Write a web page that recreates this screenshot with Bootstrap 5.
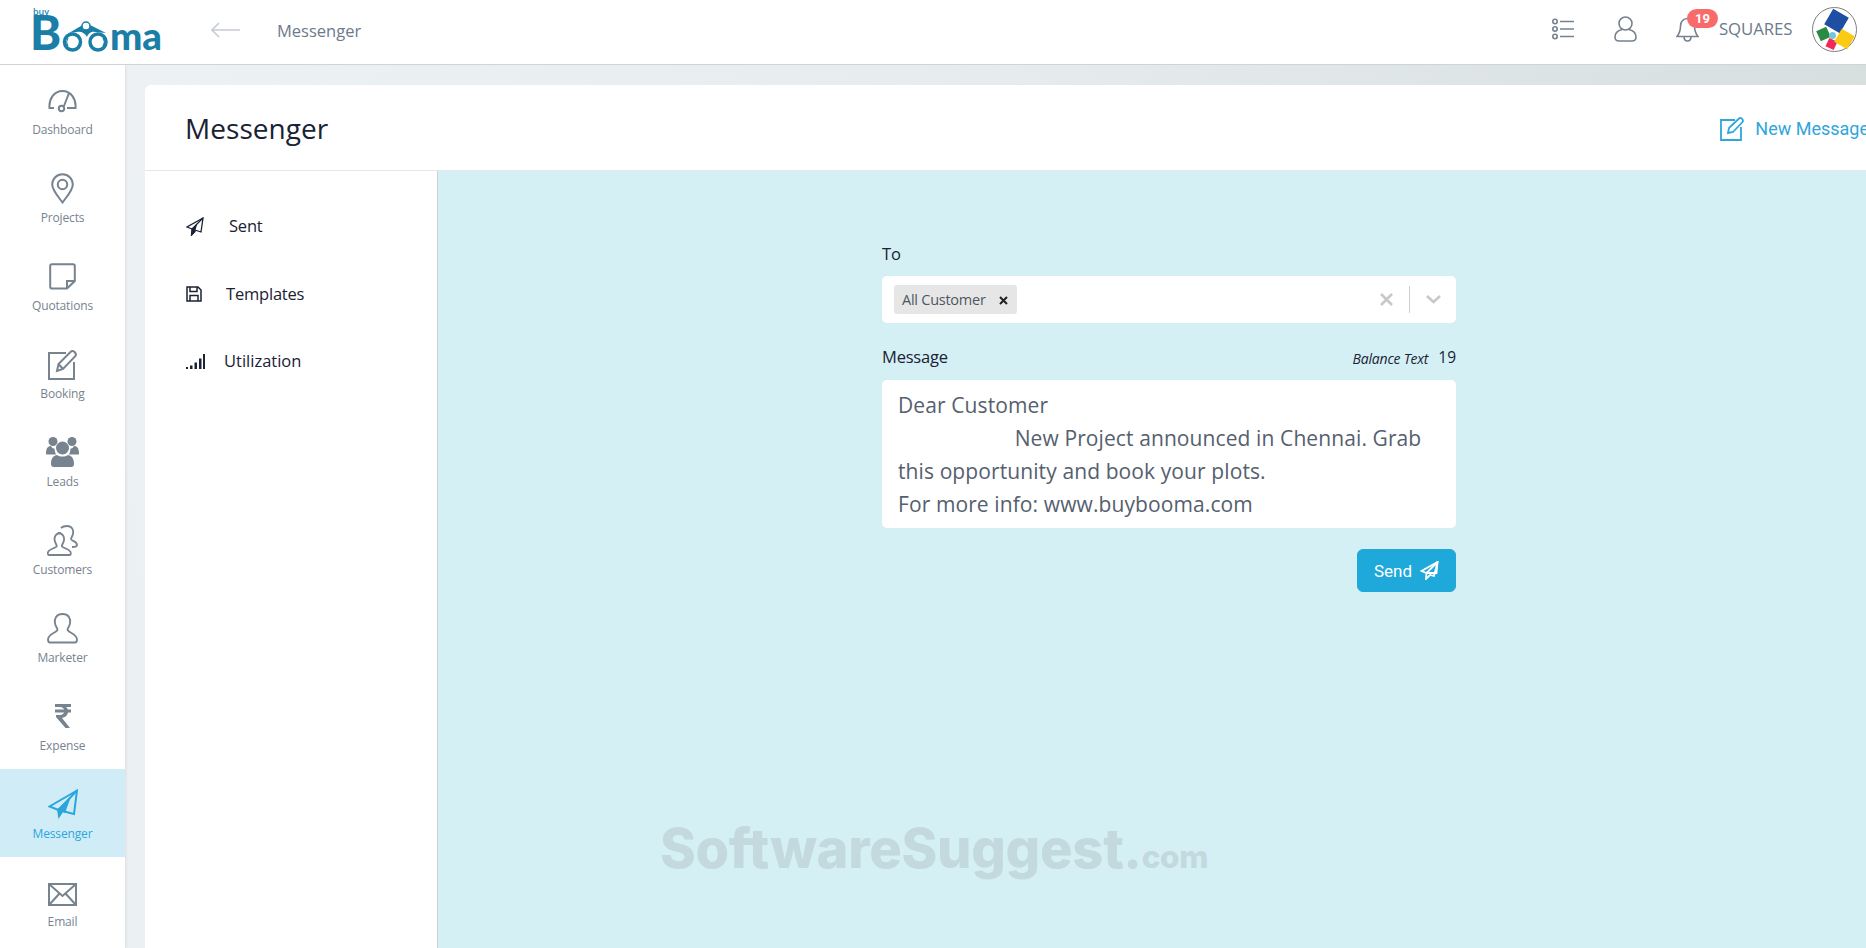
<!DOCTYPE html>
<html lang="en">
<head>
<meta charset="utf-8">
<title>Messenger</title>
<link href="https://cdn.jsdelivr.net/npm/bootstrap@5.3.0/dist/css/bootstrap.min.css" rel="stylesheet">
<style>
html,body{height:948px;overflow:hidden}
body{font-family:"Open Sans","Noto Sans",sans-serif;background:linear-gradient(100deg,#eef2f5 0%,#e6ecee 50%,#d4dcdc 100%);color:#1a2233}
.topbar{height:65px;background:#fff;border-bottom:1px solid #cfd4d9;padding:0 0 6px;flex-wrap:nowrap}
.logo-box{width:211px;padding-left:28px;height:64px;align-self:flex-start}
.back-arrow{width:66px;margin-top:2px}
.crumb{font-size:16.5px;color:#6c7a8c;margin-top:4px}
.top-ico{color:#76828f;stroke:currentColor;fill:none;stroke-width:1.6}
.t-list{margin-right:40px}
.t-user{margin-right:39px}
.bell-wrap{width:43px;height:40px}
.count-pill{position:absolute;left:11px;top:0;background:#f96b6b;color:#fff;font:700 13px/19px Roboto,sans-serif;border-radius:10px;width:31px;text-align:center}
.org{font-size:16.8px;color:#6c7a8c;width:93px;letter-spacing:-.1px}
.org-logo{margin-right:9px}
.shell{height:883px}
.side{width:125px;background:#fff;box-shadow:1px 0 3px rgba(0,0,0,.08)}
.side-item{height:88px;padding-top:17px;color:#77838f;text-decoration:none;font-size:12px;letter-spacing:-.15px}
.side-item:hover{color:#77838f}
.side-item.on{background:#d0edf7;color:#2aa6dc}
.side-item.on:hover{color:#2aa6dc}
.side-ico{height:36px;margin-bottom:3px}
.side-ico svg{display:block;fill:none;stroke:currentColor;stroke-width:2}
.side-ico .dash-svg{margin-top:2px}
.side-ico .mail-svg{margin-top:5px}
.side-name{line-height:18px}
.sheet{width:1755px;margin:20px 0 0 20px;background:#fff;border-top-left-radius:6px;flex:none}
.sheet-head{height:86px;padding:2px 31px 0 40px;border-bottom:1px solid #e4e8ea}
.sheet-title{font-size:28px;font-weight:400;margin:0;color:#1a2233;letter-spacing:.05px}
.new-link{color:#2fa6dc;text-decoration:none;font:400 18px Roboto,sans-serif}
.new-link svg{margin-right:10px;fill:none;stroke:currentColor;stroke-width:1.8}
.inner-menu{width:293px;border-right:1px solid #c9d5d8;padding-top:22px}
.inner-row{height:67.5px;padding-left:41px;color:#1a2233;font-size:16.5px;text-decoration:none;letter-spacing:-.2px}
.inner-row:hover{color:#1a2233}
.inner-row svg{display:block;flex:none}
.sent-t{margin-left:25px}.tpl-t{margin-left:24px}.utl-t{margin-left:19px;letter-spacing:0}
.panel{background:#d5f0f5;position:relative}
.compose{width:574px;margin:0 auto;padding-top:72px}
.f-label{font-size:16.5px;line-height:22px;color:#1a2233;letter-spacing:-.2px}
.to-box{height:47px;background:#fff;border-radius:5px;margin-top:11px;padding:0 12px;margin-bottom:22px}
.tag{background:#e6e6e6;border-radius:3px;height:29px;width:123px;padding:1px 8px 0;font-size:14.5px;color:#4d5763;letter-spacing:-.25px}
.tag svg{margin-left:auto;margin-right:1px}
.tools{margin-left:auto;gap:0}
.tools i{display:block;width:1px;height:27px;background:#cfcfcf;margin:0 16px}
.chev{margin-right:3px}
.bal{font-size:14px;font-style:italic;letter-spacing:-.2px;margin-right:10px;margin-top:2px}
.bal-n{font-size:15.5px;margin-top:1px}
.msg-box{display:block;width:100%;height:148px;margin-top:11px;border:0;border-radius:5px;background:#fff;color:#55606e;font:21px/33px "Open Sans",sans-serif;letter-spacing:.1px;padding:9px 16px 0;resize:none;outline:0;overflow:hidden}
.send-btn{background:#1fa8da;border-color:#1fa8da;color:#fff;width:99px;height:43px;margin-top:21px;font:400 17px Roboto,sans-serif;padding:0}
.send-btn:hover{background:#1fa8da;border-color:#1fa8da;color:#fff}
.send-btn svg{margin-left:8px;fill:none;stroke:#fff;stroke-width:1.8}
.wm{position:absolute;left:222px;top:642px;font:800 54.3px/70px Inter,sans-serif;color:#c3d9dd;white-space:nowrap;letter-spacing:-.3px}
.wm span{font-size:31.5px}
.wm b{font-weight:800;font-size:52px}
</style>
</head>
<body>
<nav class="navbar topbar d-flex align-items-center justify-content-start">
  <a class="logo-box d-block text-decoration-none" href="#" aria-label="Booma">
    <svg width="140" height="64" viewBox="28 0 140 64">
      <text x="33" y="15" font-family="Open Sans" font-size="9" font-weight="600" fill="#2a86ad">buy</text>
      <text x="30" y="50" font-family="Lato" font-size="47" font-weight="900" fill="#1a7ea6">B</text>
      <path d="M69 33 86 23 106 33 95 32C91 31 88 34 87 37 85 33 81 31 77 32Z" fill="#1a7ea6"/>
      <circle cx="86" cy="26" r="4" fill="#fff" stroke="#1a7ea6" stroke-width="1.5"/>
      <circle cx="72.500" cy="42" r="8" fill="none" stroke="#1a7ea6" stroke-width="3.500"/>
      <path d="M68 38a7 7 0 0 0 0 8" fill="none" stroke="#1a7ea6" stroke-width="1"/>
      <circle cx="98" cy="42" r="8" fill="none" stroke="#1a7ea6" stroke-width="3.500"/>
      <path d="M103 38a7 7 0 0 1 0 8" fill="none" stroke="#1a7ea6" stroke-width="1"/>
      <text x="110" y="50" font-family="Lato" font-size="37" font-weight="900" fill="#1a7ea6" textLength="52" lengthAdjust="spacingAndGlyphs">ma</text>
    </svg>
  </a>
  <a class="back-arrow d-block" href="#" aria-label="Back">
    <svg class="d-block" width="29" height="16" viewBox="0 0 29 16" fill="none" stroke="#c6ccd3" stroke-width="1.6"><path d="M29 8H1M8 1 1 8l7 7"/></svg>
  </a>
  <span class="crumb">Messenger</span>
  <div class="ms-auto d-flex align-items-center">
    <svg class="top-ico t-list" width="22" height="22" viewBox="0 0 22 22"><circle cx="3" cy="3.500" r="2.200"/><circle cx="3" cy="11" r="2.200"/><circle cx="3" cy="18.500" r="2.200"/><path d="M8 3.500h14M8 11h14M8 18.500h14"/></svg>
    <svg class="top-ico t-user" width="23" height="26" viewBox="0 0 23 26"><circle cx="11.500" cy="7.500" r="6.500"/><path d="M8 13.500C4 14.500 1 17 1 21c0 3 1.500 4 4 4h13c2.500 0 4-1 4-4 0-4-3-6.500-7-7.500"/></svg>
    <div class="bell-wrap position-relative">
      <svg class="top-ico position-absolute top-0 start-0 mt-2" width="23" height="26" viewBox="0 0 23 26"><path d="M11.500 1.500C7 1.500 4.500 5 4.500 9c0 6-1.500 8-3.500 10.500h21C20 17 18.500 15 18.500 9c0-4-2.500-7.500-7-7.500ZM8 19.500c0 6 7 6 7 0"/></svg>
      <span class="count-pill">19</span>
    </div>
    <span class="org">SQUARES</span>
    <svg class="org-logo" width="45" height="45" viewBox="-22.500 -22.500 45 45" role="img" aria-label="Squares logo">
      <circle r="22" fill="#fff" stroke="#7d7d7d" stroke-width="1"/>
      <rect x="-7" y="-17.500" width="18" height="18" fill="#1f4fa3" transform="rotate(30 2 -8.500)"/>
      <rect x="-16.500" y="-1" width="11" height="11" fill="#2a8a3f" transform="rotate(-25 -11 4.500)"/>
      <rect x="-7.500" y="10" width="9" height="9" fill="#ef2a5a" transform="rotate(25 -3 14.500)"/>
      <rect x="2.500" y="2" width="15" height="15" fill="#fbcb14" transform="rotate(30 10 9.500)"/>
      <circle cx="-2" cy="6" r="3.500" fill="#74c6da"/>
    </svg>
  </div>
</nav>

<div class="shell d-flex">
  <aside class="side flex-shrink-0">
    <a href="#" class="side-item d-flex flex-column align-items-center"><span class="side-ico d-flex align-items-center">
      <svg class="dash-svg" width="29" height="23" viewBox="0 0 29 23"><path d="M6 18H1.500C.7 9 6 1 14.500 1S28.300 9 27.500 18H19M21 3 16 16"/><circle cx="13.500" cy="18.500" r="2.700"/><path d="M5 11.500h.1M8.500 6h.1M14.500 4h.1M24 11.500h.1" stroke-width="1.800"/></svg></span><span class="side-name">Dashboard</span></a>
    <a href="#" class="side-item d-flex flex-column align-items-center"><span class="side-ico d-flex align-items-center">
      <svg width="23" height="31" viewBox="0 0 23 31"><path d="M11.500 29.500C6 22 1.200 17 1.200 11.500a10.300 10.300 0 0 1 20.600 0C21.800 17 17 22 11.500 29.500Z"/><circle cx="11.500" cy="11.500" r="4.700"/></svg></span><span class="side-name">Projects</span></a>
    <a href="#" class="side-item d-flex flex-column align-items-center"><span class="side-ico d-flex align-items-center">
      <svg width="27" height="27" viewBox="0 0 27 27"><path d="M18 25.500H3Q1.200 25.500 1.200 23.700V3Q1.200 1.200 3 1.200h21Q25.800 1.200 25.800 3V18ZM18 25.500V18h7.800" /></svg></span><span class="side-name">Quotations</span></a>
    <a href="#" class="side-item d-flex flex-column align-items-center"><span class="side-ico d-flex align-items-center">
      <svg width="31" height="31" viewBox="0 0 31 31"><path d="M19 4H2v26h25V13"/><path d="M10 22 11.500 15 24 2.500c2-2 6 2 4.500 4.500L16 20Z"/><path d="M11.500 15 16 20"/></svg></span><span class="side-name">Booking</span></a>
    <a href="#" class="side-item d-flex flex-column align-items-center"><span class="side-ico d-flex align-items-center">
      <svg width="33" height="30" viewBox="0 0 33 30"><circle cx="7" cy="4.500" r="4.500" fill="currentColor" stroke="none"/><circle cx="26" cy="4.500" r="4.500" fill="currentColor" stroke="none"/><path d="M0 17c0-6 2-8 5-8 1 2 2 2.500 3.500 2.500 0 2 .5 4 1.500 6H2c-1 0-2 0-2-.5ZM33 17c0-6-2-8-5-8-1 2-2 2.500-3.500 2.500 0 2-.5 4-1.500 6h9c1 0 1.500 0 1.500-.5Z" fill="currentColor" stroke="none"/><circle cx="16.500" cy="11" r="6.500" fill="currentColor" stroke="none"/><path d="M8 30c-2 0-3-1-3-3 0-4 1-8 6-9 3 2 8 2 11 0 5 1 6 5 6 9 0 2-1 3-3 3Z" fill="currentColor" stroke="none"/></svg></span><span class="side-name">Leads</span></a>
    <a href="#" class="side-item d-flex flex-column align-items-center"><span class="side-ico d-flex align-items-center">
      <svg width="31" height="31" viewBox="0 0 31 31"><path d="M13 8c-5 0-7 4-6 8 .5 2 1.500 3 2 5 0 2-9 3-9 7 0 1 0 2 1 2h21c1 0 1-1 1-2 0-4-9-5-9-7 .5-2 1.500-3 2-5 1-4-1-8-6-8Z" transform="translate(.800 0)" stroke-width="1.800"/><path d="M14 3c1-1 3-2 6-2 5 0 7 4 6 8-.5 2-1.500 3-2 5 0 2 6 2 6 6 0 2-2 2-5 2" stroke-width="1.800"/></svg></span><span class="side-name">Customers</span></a>
    <a href="#" class="side-item d-flex flex-column align-items-center"><span class="side-ico d-flex align-items-center">
      <svg width="31" height="31" viewBox="0 0 31 31"><path stroke-width="1.800" d="M15.500 1c-6 0-8.500 4.500-7.500 9.500.5 2.500 2 4 2.500 6 0 3-9.500 4-9.500 10 0 2 .5 3 2 3h25c1.500 0 2-1 2-3 0-6-9.500-7-9.500-10 .5-2 2-3.500 2.500-6C24 5.500 21.500 1 15.500 1Z"/></svg></span><span class="side-name">Marketer</span></a>
    <a href="#" class="side-item d-flex flex-column align-items-center"><span class="side-ico d-flex align-items-center">
      <svg width="16" height="24" viewBox="0 0 16 24"><path fill="currentColor" stroke="none" d="M0 0h16v3h-5c1 .7 1.600 1.500 2 2.500h3v3h-3c-.5 3-3 5-6 5.500l8 10H10.500L1 13v-2h4c2 0 3.500-1 4-2.500H0v-3h9C8.500 4 7 3 5 3H0Z"/></svg></span><span class="side-name">Expense</span></a>
    <a href="#" class="side-item on d-flex flex-column align-items-center"><span class="side-ico d-flex align-items-center">
      <svg width="30" height="31" viewBox="0 0 30 31"><path d="M29 1.500 1.500 17.500l9 3.500L26 25Z"/><path d="M29 1.500 10.500 21"/><path d="M10.500 30 9 20.500l14-13-6 16.500-2-1Z" fill="currentColor" stroke="none"/></svg></span><span class="side-name">Messenger</span></a>
    <a href="#" class="side-item d-flex flex-column align-items-center"><span class="side-ico d-flex align-items-center">
      <svg class="mail-svg" width="29" height="23" viewBox="0 0 29 23"><path d="M1 1h27v21H1ZM1 1l13.500 12L28 1M1 22l10.500-11.500M28 22 17.500 10.500"/></svg></span><span class="side-name">Email</span></a>
  </aside>

  <main class="sheet d-flex flex-column">
    <header class="sheet-head d-flex align-items-center justify-content-between">
      <h1 class="sheet-title">Messenger</h1>
      <a href="#" class="new-link d-flex align-items-center">
        <svg width="25" height="24" viewBox="0 0 25 24"><path d="M15 3H1v20h20V10"/><path d="M8 16 9 11 19 1.500c2-1.500 5 1.500 3.500 3.500L13 15Z"/></svg>New Message</a>
    </header>
    <div class="d-flex flex-grow-1">
      <nav class="inner-menu flex-shrink-0">
        <a href="#" class="inner-row d-flex align-items-center">
          <svg width="18" height="19" viewBox="0 0 18 19" fill="none" stroke="#1a2233" stroke-width="1.300"><path d="M17 1 1 10l5 2 9 3Z"/><path d="M17 1 6 12l-.5 6 4-4"/><path d="M6 17.500 6.500 12 10 9 8.500 14Z" fill="#1a2233"/></svg>
          <span class="sent-t">Sent</span></a>
        <a href="#" class="inner-row d-flex align-items-center">
          <svg width="16" height="16" viewBox="0 0 16 16" fill="none" stroke="#1a2233" stroke-width="1.500"><path d="M1 1h11l3 3v11H1Z"/><path d="M4 1v4.500h7V1M4 15V9.500h8V15"/></svg>
          <span class="tpl-t">Templates</span></a>
        <a href="#" class="inner-row d-flex align-items-center">
          <svg width="19" height="15" viewBox="0 0 19 15" fill="#1a2233"><path d="M0 13h2v2H0ZM4 11.500h2.500V15H4ZM8.500 8.500H11V15H8.500ZM13 4.500h2.500V15H13ZM17 0h2v15h-2Z"/></svg>
          <span class="utl-t">Utilization</span></a>
      </nav>
      <section class="panel flex-grow-1">
        <form class="compose">
          <label class="f-label d-block" for="toField">To</label>
          <div class="to-box d-flex align-items-center" id="toField">
            <span class="tag d-flex align-items-center">All Customer
              <svg width="9" height="9" viewBox="0 0 9 9" stroke="#222" stroke-width="2"><path d="M1 1l7 7M8 1 1 8"/></svg></span>
            <span class="tools d-flex align-items-center">
              <svg width="13" height="13" viewBox="0 0 13 13" stroke="#c8c8c8" stroke-width="2.600"><path d="M1 1l11 11M12 1 1 12"/></svg>
              <i></i>
              <svg class="chev" width="15" height="9" viewBox="0 0 15 9" fill="none" stroke="#c8c8c8" stroke-width="2.600"><path d="M1 1l6.500 6L14 1"/></svg>
            </span>
          </div>
          <div class="d-flex align-items-center">
            <label class="f-label" for="msg">Message</label>
            <span class="bal ms-auto">Balance Text</span><span class="bal-n">19</span>
          </div>
          <textarea class="msg-box" id="msg" rows="4">Dear Customer
                     New Project announced in Chennai. Grab this opportunity and book your plots.
For more info: www.buybooma.com</textarea>
          <div class="d-flex justify-content-end">
            <button type="button" class="btn send-btn d-flex align-items-center justify-content-center">Send
              <svg width="19" height="19" viewBox="0 0 18 19"><path d="M17 1 1 10l5 2 10 0Z"/><path d="M17 1 6 12l-.5 6 4-4 4 1Z"/></svg></button>
          </div>
        </form>
        <div class="wm">SoftwareSuggest<span><b>.</b>com</span></div>
      </section>
    </div>
  </main>
</div>
<script src="https://cdn.jsdelivr.net/npm/bootstrap@5.3.0/dist/js/bootstrap.bundle.min.js"></script>
</body>
</html>
